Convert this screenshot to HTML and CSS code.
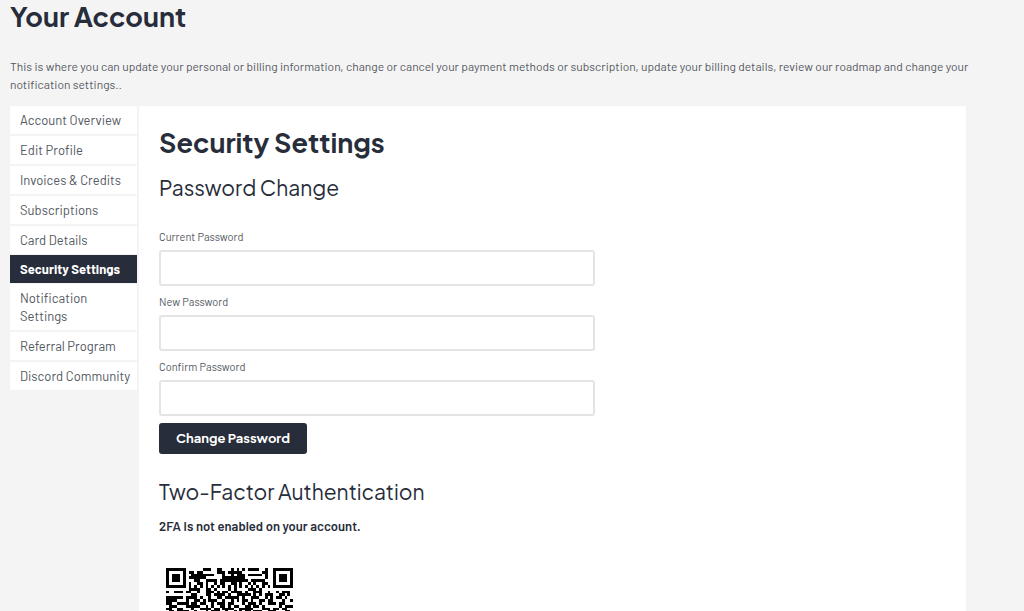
FILE: index.html
```html
<!DOCTYPE html>
<html lang="en">
<head>
<meta charset="utf-8">
<meta name="viewport" content="width=device-width, initial-scale=1">
<title>Your Account</title>
<link rel="stylesheet" href="styles.css">
</head>
<body>
<header class="page-header">
  <h1 class="page-title">Your Account</h1>
  <p class="intro">This is where you can update your personal or billing information, change or cancel your payment methods or subscription, update your billing details, review our roadmap and change your notification settings..</p>
</header>
<div class="account">
  <nav class="menu" aria-label="Account">
    <a class="menu-link" href="#">Account Overview</a>
    <a class="menu-link" href="#">Edit Profile</a>
    <a class="menu-link" href="#">Invoices &amp; Credits</a>
    <a class="menu-link" href="#">Subscriptions</a>
    <a class="menu-link" href="#">Card Details</a>
    <a class="menu-link menu-link-active" href="#" aria-current="page">Security Settings</a>
    <a class="menu-link" href="#">Notification Settings</a>
    <a class="menu-link" href="#">Referral Program</a>
    <a class="menu-link" href="#">Discord Community</a>
  </nav>
  <main class="panel">
    <h2 class="panel-title">Security Settings</h2>
    <h3 class="section-title">Password Change</h3>
    <form class="password-form">
      <label class="label" for="current">Current Password</label>
      <input class="field" id="current" type="password">
      <label class="label" for="new">New Password</label>
      <input class="field" id="new" type="password">
      <label class="label" for="confirm">Confirm Password</label>
      <input class="field" id="confirm" type="password">
      <button class="button" type="button">Change Password</button>
    </form>
    <h3 class="section-title">Two-Factor Authentication</h3>
    <p class="status">2FA is not enabled on your account.</p>
    <svg class="qr" id="qr" viewBox="0 0 45 45" role="img" aria-label="QR code"></svg>
  </main>
</div>
<script src="qr.js"></script>
</body>
</html>
```
FILE: styles.css
```css
* {
  box-sizing: border-box;
}

body {
  margin: 0;
  height: 100vh;
  overflow: hidden;
  background: #f4f4f4;
  color: #545962;
  font-family: Barlow, Roboto, sans-serif;
  font-size: 12px;
  line-height: 18px;
}

h1, h2, h3, p {
  margin: 0;
}

.page-header {
  padding: 0 0 13px 10px;
}

.page-title,
.panel-title {
  color: #272d3a;
  font-family: "Plus Jakarta Sans", Inter, sans-serif;
  font-size: 27px;
  line-height: 33px;
  font-weight: 700;
}

.intro {
  padding-top: 24px;
}

.account {
  display: flex;
  align-items: flex-start;
  gap: 2px;
  margin: 0 58px 0 10px;
}

.menu {
  display: flex;
  flex-direction: column;
  flex: 0 0 127px;
  gap: 2px;
}

.menu-link {
  padding: 5px 6px 5px 10px;
  background: #fff;
  color: #545962;
  font-size: 13px;
  text-decoration: none;
}

/* The active item covers half of the divider on each side. */
.menu-link-active {
  margin: -1px 0;
  background: #272d3a;
  color: #fff;
  font-weight: 700;
}

.panel {
  flex: 1;
  padding: 20px 28px 20px 20px;
  background: #fff;
}

.section-title {
  padding-top: 14px;
  color: #272d3a;
  font-family: "Plus Jakarta Sans", Inter, sans-serif;
  font-size: 21px;
  line-height: 30px;
  font-weight: 400;
}

.password-form {
  display: flex;
  flex-direction: column;
  align-items: flex-start;
  padding: 25px 0 9px;
}

.label {
  padding-bottom: 4px;
  font-size: 11px;
  line-height: 18px;
}

.field {
  width: 56%;
  height: 36px;
  margin-bottom: 7px;
  padding: 0 10px;
  border: 2px solid #e4e4e4;
  border-radius: 3px;
  background: #fff;
  font: inherit;
}

.button {
  padding: 6px 17px 7px;
  border: 0;
  border-radius: 3px;
  background: #272d3a;
  color: #fff;
  font: 700 13px/18px "Plus Jakarta Sans", Roboto, sans-serif;
}

.status {
  padding: 10px 0 33px;
  color: #272d3a;
  font-size: 13px;
  font-weight: 600;
}

.qr {
  display: block;
  width: 127px;
  margin-left: 7px;
  fill: #000;
}
```
FILE: qr.js
```js
const rows = [
  "#######......###..##...#.#.#.####..#..#######",
  "#.....#.##.##.....###.#####.......##..#.....#",
  "#.###.#..########...#..#.###.#####.#..#.###.#",
  "#.###.#.######......########.......#..#.###.#",
  "#.###.#...##..####.##########.#####...#.###.#",
  "#.....#.#..##.#..#.##..##.#..#.#..##..#.....#",
  "#######.#.#.#.#.#.#.#.#.#.#.#.#.#.#.#.#######",
  "........####..##.#....#.#....###.#...........",
  "#..###.##..#..###.#.##.####.#..###..#..#.###.",
  ".........##...##.####.#..#####.#.#.###..##.#.",
  "######.####.#..#..##.#####.#..###..#.#.##.#..",
  "####...#..##.#.###..#..#.#.##.#..##.##...#..#",
  "##..####.##.##..#.###.##...#.###.#..###.##...",
  ".###...#####..#.#..##.#.##..##.##.#.....#.###",
  "##..##...#..####.##.####..#####...###.##.##..",
  ".##.####..#...#.###..#..#.#.##.###..###...##."
];

// One rectangle for each horizontal run of dark modules.
const runs = rows.flatMap((row, y) =>
  [...row.matchAll(/#+/g)].map(({ 0: run, index }) => `M${index} ${y}h${run.length}v1h-${run.length}z`)
);
const path = document.createElementNS("http://www.w3.org/2000/svg", "path");
path.setAttribute("d", runs.join(""));
path.setAttribute("shape-rendering", "crispEdges");
document.getElementById("qr").append(path);
```
